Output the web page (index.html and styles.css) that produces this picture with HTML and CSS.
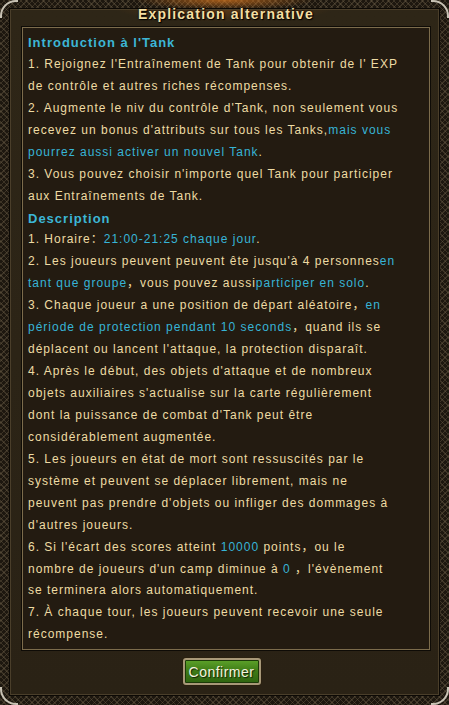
FILE: index.html
```html
<!DOCTYPE html>
<html lang="fr">
<head>
<meta charset="utf-8">
<link rel="stylesheet" href="styles.css">
</head>
<body>
<div class="frame">
  <div class="inner">
    <div class="title">Explication alternative</div>
    <div class="panel">
      <div class="head">Introduction à l'Tank</div>
      <div>1. Rejoignez l'Entraînement de Tank pour obtenir de l' EXP</div>
      <div>de contrôle et autres riches récompenses.</div>
      <div>2. Augmente le niv du contrôle d'Tank, non seulement vous</div>
      <div>recevez un bonus d'attributs sur tous les Tanks,<span class="hl">mais vous</span></div>
      <div><span class="hl">pourrez aussi activer un nouvel Tank</span>.</div>
      <div>3. Vous pouvez choisir n'importe quel Tank pour participer</div>
      <div>aux Entraînements de Tank.</div>
      <div class="head">Description</div>
      <div>1. Horaire：<span class="hl">21:00-21:25 chaque jour</span>.</div>
      <div>2. Les joueurs peuvent peuvent ête jusqu'à 4 personnes<span class="hl">en</span></div>
      <div><span class="hl">tant que groupe</span>，vous pouvez aussi<span class="hl">participer en solo</span>.</div>
      <div>3. Chaque joueur a une position de départ aléatoire，<span class="hl">en</span></div>
      <div><span class="hl">période de protection pendant 10 seconds</span>，quand ils se</div>
      <div>déplacent ou lancent l'attaque, la protection disparaît.</div>
      <div>4. Après le début, des objets d'attaque et de nombreux</div>
      <div>objets auxiliaires s'actualise sur la carte régulièrement</div>
      <div>dont la puissance de combat d'Tank peut être</div>
      <div>considérablement augmentée.</div>
      <div>5. Les joueurs en état de mort sont ressuscités par le</div>
      <div>système et peuvent se déplacer librement, mais ne</div>
      <div>peuvent pas prendre d'objets ou infliger des dommages à</div>
      <div>d'autres joueurs.</div>
      <div>6. Si l'écart des scores atteint <span class="hl">10000</span> points，ou le</div>
      <div>nombre de joueurs d'un camp diminue à <span class="hl">0</span> ，l'évènement</div>
      <div>se terminera alors automatiquement.</div>
      <div>7. À chaque tour, les joueurs peuvent recevoir une seule</div>
      <div>récompense.</div>
    </div>
    <div class="footer">
      <button class="btn">Confirmer</button>
    </div>
  </div>
  <span class="corner tl"></span>
  <span class="corner tr"></span>
  <span class="corner bl"></span>
  <span class="corner br"></span>
</div>
</body>
</html>
```
FILE: styles.css
```css
html, body {
  margin: 0;
  padding: 0;
  background: #15100a;
}

.frame {
  position: relative;
  width: 449px;
  height: 705px;
  box-sizing: border-box;
  padding: 8px 9px 9px 9px;
  background:
    radial-gradient(ellipse 90px 10px at 50% 0, rgba(220,120,30,0.7), transparent),
    repeating-linear-gradient(45deg, rgba(120,105,80,0.35) 0 1px, transparent 1px 4px),
    repeating-linear-gradient(-45deg, rgba(120,105,80,0.35) 0 1px, transparent 1px 4px),
    #1d170f;
  display: flex;
}

.inner {
  flex: 1;
  display: flex;
  flex-direction: column;
  background:
    radial-gradient(ellipse 110px 14px at 50% 0, rgba(150,80,20,0.45), transparent),
    linear-gradient(#2e2617, #2a2215);
  box-shadow: inset 0 0 0 1px #0c0905, inset 0 0 0 2px #4a3e2a;
  padding: 0 10px 0 13px;
}

.title {
  height: 19px;
  line-height: 13px;
  text-align: center;
  font-family: "Liberation Sans", Arial, sans-serif;
  font-weight: bold;
  font-size: 14px;
  letter-spacing: 1.2px;
  color: #f4dea2;
  text-shadow: 0 0 2px #000, 1px 1px 1px #000;
  margin-top: -1px;
  padding-top: 1px;
}

.panel {
  height: 623px;
  box-sizing: border-box;
  border: 1px solid #7c6c4c;
  box-shadow: 0 0 0 1px #0e0b06;
  background: #231b11;
  padding: 4px 0 0 5px;
  font-family: "Liberation Sans", Arial, "Noto Sans CJK SC", sans-serif;
  font-size: 12px;
  letter-spacing: 1px;
  line-height: 21.93px;
  color: #eedba4;
  white-space: nowrap;
}

.head {
  color: #3cb6d6;
  font-weight: bold;
  font-size: 13px;
}

.hl {
  color: #37b4d6;
}

.footer {
  flex: 1;
  display: flex;
  justify-content: center;
  align-items: flex-start;
  padding-top: 8px;
  padding-right: 9px;
}

.btn {
  width: 78px;
  height: 27px;
  box-sizing: border-box;
  border: 2px solid #a89878;
  border-radius: 3px;
  box-shadow: 0 0 0 1px #2a2010, inset 0 0 0 1px #1c3a08;
  background: linear-gradient(#5da22a, #3d7a16 50%, #2f6410);
  color: #f4f4de;
  font-family: "Liberation Sans", Arial, sans-serif;
  font-size: 14px;
  letter-spacing: 0.5px;
  padding: 0;
  text-shadow: 1px 1px 1px #10200a;
}

.corner {
  position: absolute;
  width: 16px;
  height: 16px;
  border-color: #c8c2b4;
  border-style: solid;
  border-width: 0;
}
.corner.tl { top: 0; left: 0; border-top-width: 2px; border-left-width: 2px; border-top-left-radius: 16px; }
.corner.tr { top: 0; right: 0; border-top-width: 2px; border-right-width: 2px; border-top-right-radius: 16px; }
.corner.bl { bottom: 0; left: 0; border-bottom-width: 2px; border-left-width: 2px; border-bottom-left-radius: 16px; }
.corner.br { bottom: 0; right: 0; border-bottom-width: 2px; border-right-width: 2px; border-bottom-right-radius: 16px; }
```
